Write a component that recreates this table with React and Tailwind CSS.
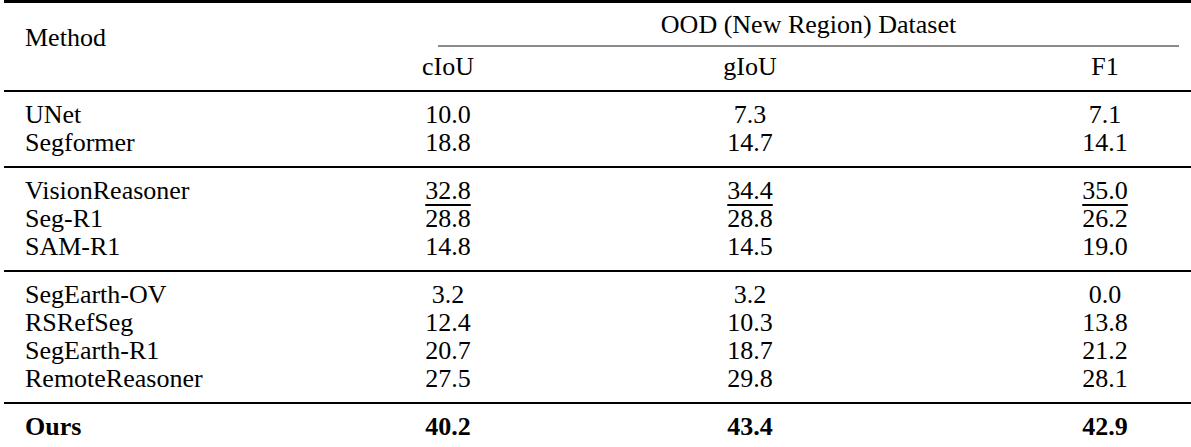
import React from "react";

const groups = [
  [
    { m: "UNet", v: ["10.0", "7.3", "7.1"] },
    { m: "Segformer", v: ["18.8", "14.7", "14.1"] },
  ],
  [
    { m: "VisionReasoner", v: ["32.8", "34.4", "35.0"], u: true },
    { m: "Seg-R1", v: ["28.8", "28.8", "26.2"] },
    { m: "SAM-R1", v: ["14.8", "14.5", "19.0"] },
  ],
  [
    { m: "SegEarth-OV", v: ["3.2", "3.2", "0.0"] },
    { m: "RSRefSeg", v: ["12.4", "10.3", "13.8"] },
    { m: "SegEarth-R1", v: ["20.7", "18.7", "21.2"] },
    { m: "RemoteReasoner", v: ["27.5", "29.8", "28.1"] },
  ],
  [{ m: "Ours", v: ["40.2", "43.4", "42.9"], b: true }],
];

const gapClasses = ["", "ml-[202px]", "ml-[255px]"];

function Val({ text, u }) {
  return u ? (
    <span className="underline decoration-[1.5px] underline-offset-[5px]">{text}</span>
  ) : (
    text
  );
}

function Row({ row }) {
  return (
    <div className={row.b ? "flex h-[28px] font-bold" : "flex h-[28px]"}>
      <div className="w-[398px] pl-[25px]">{row.m}</div>
      {row.v.map((x, i) => (
        <div key={i} className={`w-[100px] text-center ${gapClasses[i]}`}>
          <Val text={x} u={row.u} />
        </div>
      ))}
    </div>
  );
}

export default function App() {
  return (
    <div className="w-[1191px] h-[447px] overflow-hidden bg-white text-black font-['Liberation_Serif',serif] text-[26px] leading-[28px]">
      <div className="h-[3px] bg-black ml-[4px]" />
      <div className="flex h-[87px]">
        <div className="w-[398px] pl-[25px] pt-[21px]">Method</div>
        <div className="flex-1 flex flex-col">
          <div className="ml-[40px] w-[741px] pt-[8px] text-center">OOD (New Region) Dataset</div>
          <div className="ml-[40px] w-[741px] h-[2px] mt-[6px] bg-[#8c8c8c]" />
          <div className="flex mt-[6px]">
            <div className="w-[100px] text-center">cIoU</div>
            <div className="w-[100px] text-center ml-[202px]">gIoU</div>
            <div className="w-[100px] text-center ml-[255px]">F1</div>
          </div>
        </div>
      </div>
      {groups.map((g, gi) => (
        <div key={gi}>
          <div className="h-[2px] bg-black ml-[4px]" />
          <div className="py-[9px]">
            {g.map((r, ri) => (
              <Row key={ri} row={r} />
            ))}
          </div>
        </div>
      ))}
    </div>
  );
}
